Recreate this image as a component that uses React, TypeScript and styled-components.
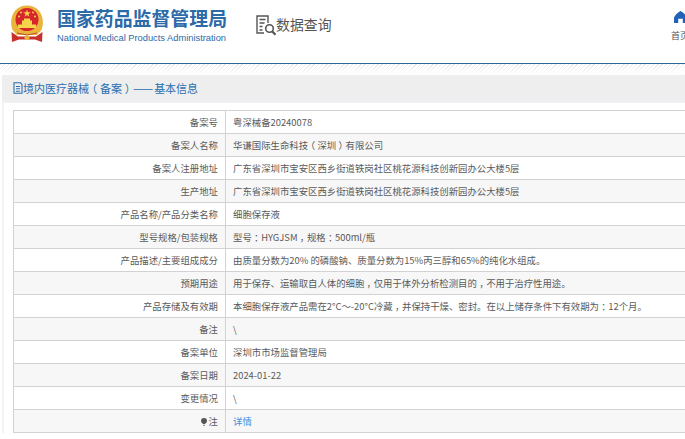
import React from "react";
import styled, { createGlobalStyle } from "styled-components";

const Global = createGlobalStyle`
  html, body { margin: 0; padding: 0; background: #fff; overflow: hidden; }
  body { font-family: "Liberation Sans", "Noto Sans CJK SC", sans-serif; }
`;
const Page = styled.div`width: 685px; height: 439px; overflow: hidden; background: #fff;`;
const Header = styled.header`
  height: 63px; display: flex; align-items: flex-start; border-bottom: 1px solid #2a6a94; box-sizing: content-box; position: relative;
`;
const Emblem = styled.svg`width: 36px; height: 38px; margin: 5px 0 0 9px; flex: none;`;
const Brand = styled.div`margin: 6px 0 0 12px; width: 170px; flex: none;`;
const BrandCn = styled.div`font: 700 18.9px/24px "Noto Sans CJK SC", sans-serif; color: #2c6aa8; white-space: nowrap;`;
const BrandEn = styled.div`font: 9.3px/12px "Liberation Sans", sans-serif; color: #2c6aa8; margin-top: 2px; white-space: nowrap;`;
const Query = styled.div`display: flex; align-items: center; margin: 14px 0 0 28px;`;
const QueryIcon = styled.svg`width: 22px; height: 22px; flex: none;`;
const QueryText = styled.span`font: 13.9px/20px "Noto Sans CJK SC", sans-serif; color: #555; white-space: nowrap; padding-bottom: 2px; margin-left: -1px;`;
const Home = styled.div`position: absolute; left: 671px; top: 11px; width: 30px; text-align: left;`;
const HomeIcon = styled.svg`display: block; width: 13px; height: 12px; margin-left: 3px;`;
const HomeText = styled.div`font: 9px/12px "Noto Sans CJK SC", sans-serif; color: #555; margin-top: 7px; white-space: nowrap;`;
const Hatch = styled.div`
  height: 11px;
  background: linear-gradient(#fff0, #fff 90%), repeating-linear-gradient(135deg, #e6e6e6 0 1px, #fff 1px 3px);
`;
const Panel = styled.section`margin-left: 2px; background: #f3f3f6; padding-left: 1px;`;
const PanelHead = styled.div`
  height: 26px; background: #eeeeee; display: flex; align-items: center; padding-left: 11px; margin-left: -1px;
  font: 11px/26px "Noto Sans CJK SC", sans-serif; color: #2a6fb0; white-space: nowrap;
`;
const DocIcon = styled.svg`width: 10px; height: 12px; flex: none;`;
const Dash = styled.span`font-size: 12px; letter-spacing: 1px;`;
const Body = styled.div`background: #fff; padding: 7px 0 0 9px; border-top: 2px solid #eef0f4; margin-left: 1px;`;
const Table = styled.div`width: 700px; border: solid #d2d2d2; border-width: 1px 0 1px 1px; box-sizing: border-box;`;
const Row = styled.div<{ $alt: boolean }>`
  display: flex; height: 23px; box-sizing: border-box; background: ${p => (p.$alt ? "#f7f7f7" : "#fff")};
  border-top: 1px solid #d2d2d2;
  &:first-child { border-top: 0; height: 22px; }
`;
const Label = styled.div`
  width: 212px; flex: none; box-sizing: border-box; padding-right: 7px; text-align: right; border-right: 1px solid #d2d2d2;
  font: 9.4px/22px "Noto Sans CJK SC", sans-serif; color: #5a5a5a; white-space: nowrap;
`;
const Value = styled.div`
  padding-left: 7px; font: 9.4px/22px "Noto Sans CJK SC", sans-serif; color: #5a5a5a; white-space: nowrap;
`;
const Detail = styled.span`color: #3d8fdc;`;
const Punct = styled.span`
  display: inline-block; width: 1em; text-align: center; font-feature-settings: "halt";
`;
const Pin = styled.svg`width: 6px; height: 8px; margin-right: 2px; vertical-align: -1px;`;

function withPunct(text: string) {
  return text.split(/([，：（）])/).map((part, i) =>
    /^[，：（）]$/.test(part) ? <Punct key={i}>{part}</Punct> : part
  );
}

const rows: [React.ReactNode, string | null][] = [
  ["备案号", "粤深械备20240078"],
  ["备案人名称", "华谦国际生命科技（深圳）有限公司"],
  ["备案人注册地址", "广东省深圳市宝安区西乡街道铁岗社区桃花源科技创新园办公大楼5层"],
  ["生产地址", "广东省深圳市宝安区西乡街道铁岗社区桃花源科技创新园办公大楼5层"],
  ["产品名称/产品分类名称", "细胞保存液"],
  ["型号规格/包装规格", "型号：HYGJSM，规格：500ml/瓶"],
  ["产品描述/主要组成成分", "由质量分数为20% 的磷酸钠、质量分数为15%丙三醇和65%的纯化水组成。"],
  ["预期用途", "用于保存、运输取自人体的细胞，仅用于体外分析检测目的，不用于治疗性用途。"],
  ["产品存储及有效期", "本细胞保存液产品需在2°C～-20°C冷藏，并保持干燥、密封。在以上储存条件下有效期为：12个月。"],
  ["备注", "\\"],
  ["备案单位", "深圳市市场监督管理局"],
  ["备案日期", "2024-01-22"],
  ["变更情况", "\\"],
  [
    <>
      <Pin viewBox="0 0 6 8"><path d="M3 0a3 3 0 0 1 3 3c0 1.6-1.6 2.4-2.4 3.2h-1.2C1.6 5.4 0 4.6 0 3a3 3 0 0 1 3-3zM2.4 7h1.2v1H2.4z" fill="#555" /></Pin>
      注
    </>,
    null,
  ],
];

export default function App() {
  return (
    <Page>
      <Global />
      <Header>
        <Emblem viewBox="0 0 36 38">
          <path d="M3.5 25 C-1 12 6 .5 18 .5 C30 .5 37 12 32.5 25 L28 30 H8 Z" fill="#e9b43c" />
          <circle cx="18" cy="14.5" r="11.5" fill="#d6262a" />
          <path d="M18 4.5l.9 2.8h2.9l-2.3 1.7.9 2.8-2.4-1.7-2.4 1.7.9-2.8-2.3-1.7h2.9z" fill="#f5d34a" />
          <circle cx="12" cy="7.5" r="1" fill="#f5d34a" />
          <circle cx="24" cy="7.5" r="1" fill="#f5d34a" />
          <circle cx="10" cy="11.5" r="1" fill="#f5d34a" />
          <circle cx="26" cy="11.5" r="1" fill="#f5d34a" />
          <path d="M9 19.5h18v3.5H9zM13 15.5h10v4H13zM15 13.5h6v2h-6z" fill="#f5d34a" />
          <path d="M2.5 27 L9 31.5 H27 L33.5 27 L33 37 L26 34.5 H10 L3 37Z" fill="#c9302a" />
          <path d="M6 26h24l-3 4H9z" fill="#e9b43c" />
          <path d="M8 28l10 2 10-2" fill="none" stroke="#b5532a" strokeWidth="1" />
          <circle cx="18" cy="32.5" r="2.5" fill="#e9b43c" />
        </Emblem>
        <Brand>
          <BrandCn>国家药品监督管理局</BrandCn>
          <BrandEn>National Medical Products Administration</BrandEn>
        </Brand>
        <Query>
          <QueryIcon viewBox="0 0 22 22" fill="none" stroke="#555" strokeWidth="1.4">
            <path d="M9 19H2V2h11v7" />
            <path d="M4.5 5.5h6M4.5 9h5M4.5 12.5h3M4.5 16h3" />
            <circle cx="14.5" cy="14.5" r="3.8" strokeWidth="1.6" />
            <path d="M17.3 17.5l3.2 3.2" strokeWidth="2.2" />
          </QueryIcon>
          <QueryText>数据查询</QueryText>
        </Query>
        <Home>
          <HomeIcon viewBox="0 0 14 13">
            <path d="M7 0 C10 1.5 12.5 4 14 7 V13 H9.5 V8.5 H4.5 V13 H0 V7 C1.5 4 4 1.5 7 0 Z" fill="#1f62b8" />
          </HomeIcon>
          <HomeText>首页</HomeText>
        </Home>
      </Header>
      <Hatch />
      <Panel>
        <PanelHead>
          <DocIcon viewBox="0 0 10 12" fill="none" stroke="#2a6fb0" strokeWidth="1.1">
            <path d="M1 .8h6.5L9 2.5v8.7H1zM3 4.5h4M3 6.8h4M3 9.2h4" />
          </DocIcon>
          境内医疗器械{withPunct("（备案）")}<Dash>——</Dash>基本信息
        </PanelHead>
        <Body>
          <Table>
            {rows.map(([label, value], i) => (
              <Row key={i} $alt={i % 2 === 1}>
                <Label>{label}</Label>
                <Value>{value === null ? <Detail>详情</Detail> : withPunct(value)}</Value>
              </Row>
            ))}
          </Table>
        </Body>
      </Panel>
    </Page>
  );
}
